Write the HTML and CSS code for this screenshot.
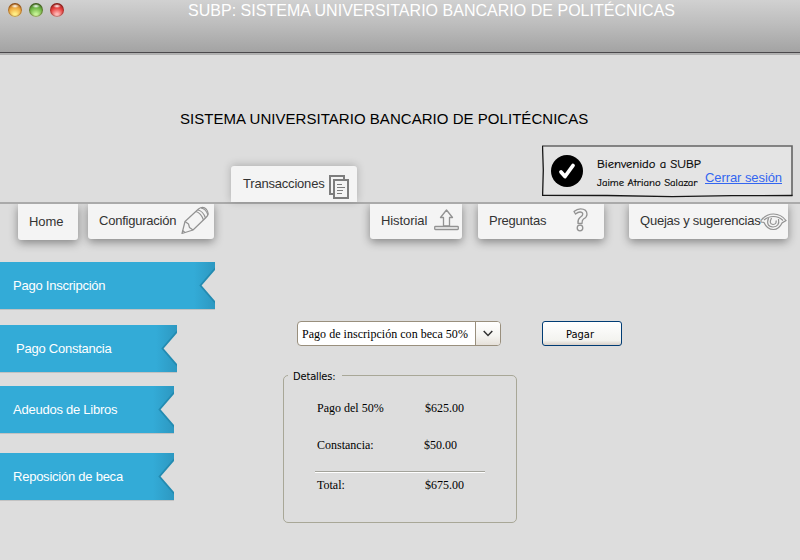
FILE: index.html
```html
<!DOCTYPE html>
<html lang="es">
<head>
<meta charset="utf-8">
<title>SUBP</title>
<link rel="stylesheet" href="styles.css">
</head>
<body>
<header class="titlebar">
  <div class="lights"><i class="light amber"></i><i class="light green"></i><i class="light red"></i></div>
  <div class="window-title">SUBP: SISTEMA UNIVERSITARIO BANCARIO DE POLITÉCNICAS</div>
</header>
<h1 class="heading">SISTEMA UNIVERSITARIO BANCARIO DE POLITÉCNICAS</h1>
<div class="upper">
  <a class="tab active"><span>Transacciones</span>
    <svg class="icon-copy" width="20" height="24" viewBox="0 0 20 24" fill="none" stroke="#7d7d7d" stroke-width="2"><path d="M15 4V1H1v18h3"/><path d="M5 5h14v18H5z"/><path d="M8 9.500h5M8 12.500h8M8 15.500h6M8 18.500h5" stroke-width="1"/></svg>
  </a>
  <section class="welcome">
    <svg class="sketch" width="252" height="53" viewBox="0 0 252 53"><path d="M.8 .800H250V51L190 50.700 130 51.600 65 51 .8 50.300 1.200 25Z" fill="#e4e4e4"/><path d="M.5 1H250V51" fill="none" stroke="#646464" stroke-width="1.600"/><path d="M.5 .8L1.300 25 .6 50.300 65 50.500 130 51.600 190 50.700 250.500 50.500" fill="none" stroke="#171717" stroke-width="1.300"/></svg>
    <svg class="check" width="32" height="32" viewBox="0 0 32 32"><circle cx="16" cy="16" r="16"/><path d="M10 17l4 4.500 8-11" fill="none" stroke="#fff" stroke-width="3.800" stroke-linecap="round" stroke-linejoin="round"/></svg>
    <div class="user"><p class="greeting">Bienvenido a SUBP</p><p class="name">Jaime Atriano Salazar</p></div>
    <a class="logout">Cerrar sesión</a>
  </section>
</div>
<nav class="lower">
  <a class="tab home"><span>Home</span></a>
  <a class="tab config"><span>Configuración</span>
    <svg class="icon-pencil" width="28" height="29" viewBox="0 0 28 29" fill="none" stroke="#929292" stroke-width="1.200" stroke-linejoin="round"><path d="M1 27.500L4 15.500 17.500 3Q22-.5 25.500 3.500 29 8 25 11.500L12 24Z"/><path d="M4 15.500l3.500 2.500 1 3.500 3.500 2.500M1.500 24.500l2.500 2M15 5.500q5 1.500 7.500 8.500M17 4q5 1 7.500 8M20 2q5 1 7 7"/></svg>
  </a>
  <a class="tab history"><span>Historial</span>
    <svg class="icon-upload" width="25" height="22" viewBox="0 0 25 22" fill="none" stroke="#929292" stroke-width="1.300" stroke-linejoin="round"><path d="M12.500 1L18.500 8.500H15.500V17H9.500V8.500H6.500Z"/><rect x=".7" y="17.500" width="23.600" height="3" rx=".8"/></svg>
  </a>
  <a class="tab questions"><span>Preguntas</span>
    <svg class="icon-help" width="15" height="24" viewBox="0 0 15 24" fill="none" stroke="#929292" stroke-width="1.300" stroke-linejoin="round"><path d="M1 3.500Q4 .8 7.500.8 14 .8 14 6.200 14 9 10.500 11 9 12 9 15.500H5Q4.500 11.500 7 9.500 10 7.500 9.800 6 9.500 4 7 4 5 4 2.500 6Z"/><circle cx="7" cy="20" r="2.800"/></svg>
  </a>
  <a class="tab complaints"><span>Quejas y sugerencias</span>
    <svg class="icon-eye" width="27" height="18" viewBox="0 0 27 18" fill="none" stroke="#929292" stroke-width="1.200"><path d="M1 7.500Q6 1 13.500 1 21 1 26 7.500L22 10Q19 16.500 13.500 16.500 7 16.500 4 9.500L1 9Z"/><path d="M4 7Q8 3.500 13.500 3.500 19 3.500 23 7.500"/><path d="M8.500 5Q5.500 13.500 13 14 20 13.500 18.500 6"/><path d="M11.500 5Q8.500 11 13 11.500 17 11 16 7.500"/></svg>
  </a>
</nav>
<main class="main">
  <aside class="side">
    <a class="ribbon inscripcion">Pago Inscripción<svg class="notch" width="30" height="47" viewBox="0 0 30 47"><path d="M30.500 6L15.500 23.500 30.500 41" fill="#ddd" stroke="#238bb1" stroke-width="1.800"/></svg></a>
    <a class="ribbon constancia">Pago Constancia<svg class="notch" width="30" height="47" viewBox="0 0 30 47"><path d="M30.500 6L15.500 23.500 30.500 41" fill="#ddd" stroke="#238bb1" stroke-width="1.800"/></svg></a>
    <a class="ribbon libros">Adeudos de Libros<svg class="notch" width="30" height="47" viewBox="0 0 30 47"><path d="M30.500 6L15.500 23.500 30.500 41" fill="#ddd" stroke="#238bb1" stroke-width="1.800"/></svg></a>
    <a class="ribbon beca">Reposición de beca<svg class="notch" width="30" height="47" viewBox="0 0 30 47"><path d="M30.500 6L15.500 23.500 30.500 41" fill="#ddd" stroke="#238bb1" stroke-width="1.800"/></svg></a>
  </aside>
  <section class="content">
    <div class="controls">
      <div class="select"><span class="value">Pago de inscripción con beca 50%</span><span class="arrow"><svg width="10" height="7" viewBox="0 0 10 7"><path d="M.7 1L5 5.500 9.300 1" fill="none" stroke="#333" stroke-width="1.500"/></svg></span></div>
      <button class="pay">Pagar</button>
    </div>
    <fieldset class="details">
      <legend>Detalles:</legend>
      <div class="row first"><span>Pago del 50%</span><span>$625.00</span></div>
      <div class="row second"><span>Constancia:</span><span>$50.00</span></div>
      <div class="rule"></div>
      <div class="row total"><span>Total:</span><span>$675.00</span></div>
    </fieldset>
  </section>
</main>
</body>
</html>
```
FILE: styles.css
```css
* { box-sizing: border-box; }
body { margin: 0; width: 800px; height: 560px; overflow: hidden; background: #ddd; font-family: "Liberation Sans", Arial, sans-serif; }
p, h1 { margin: 0; font-weight: normal; }
svg { display: block; flex: none; }

.titlebar { height: 55px; display: flex; align-items: flex-start; background: linear-gradient(#d1d1d1, #bdbdbd 24px, #a3a3a3 52px, #4a484b 52px, #4a484b 53px, #b0b0b0 53px); }
.lights { display: flex; gap: 7px; padding: 3px 0 0 8px; width: 188px; }
.light { width: 14px; height: 14px; border-radius: 50%; box-shadow: inset 0 0 1px 1px rgba(80,30,20,.4); }
.amber { background: radial-gradient(ellipse 4px 2px at 50% 22%, #fff, transparent), radial-gradient(circle 13px at 50% 85%, #ffef86 10%, #efaa40 55%, #8c4710 100%); }
.green { background: radial-gradient(ellipse 4px 2px at 50% 22%, #fff, transparent), radial-gradient(circle 13px at 50% 85%, #c6f396 10%, #70b746 55%, #285c19 100%); }
.red { background: radial-gradient(ellipse 4px 2px at 50% 22%, #fff, transparent), radial-gradient(circle 13px at 50% 85%, #ffb7b5 10%, #e73e3d 55%, #80120f 100%); }
.window-title { padding-top: 1px; font-size: 16px; line-height: 20px; letter-spacing: .02px; color: #fff; white-space: nowrap; }

.heading { height: 90px; padding: 54px 0 0 180px; font-size: 15px; line-height: 20px; letter-spacing: .04px; color: #000; white-space: nowrap; }

.upper { height: 59px; display: flex; align-items: flex-start; padding-left: 231px; border-bottom: 2px solid #aaa; }
.tab { display: flex; position: relative; height: 36px; padding: 0 0 0 11px; background: #f4f4f4; border-radius: 0 0 3px 3px; box-shadow: 0 3px 10px rgba(0,0,0,.4); color: #333; font-size: 13px; line-height: 36px; letter-spacing: -.23px; white-space: nowrap; }
.active { width: 126px; margin-top: 21px; padding-left: 12px; border-radius: 3px 3px 0 0; box-shadow: 0 -1px 9px rgba(0,0,0,.22); letter-spacing: -.2px; }
.home, .history { letter-spacing: -.08px; }
.icon-copy { margin: 9px 8px 0 auto; }

.welcome { position: relative; display: flex; width: 252px; height: 53px; margin-left: 185px; padding: 1px 0 0 9px; color: #000; }
.sketch { position: absolute; left: 0; top: 0; }
.check { position: relative; margin: 9px 0 0 0; }
.user { position: relative; width: 108px; margin-left: 14px; padding-top: 8px; font-family: "Comic Sans MS", "Comic Neue", "Open Sans", sans-serif; white-space: nowrap; -webkit-text-stroke: .2px #000; }
.greeting { font-size: 12.6px; line-height: 20px; }
.name { font-size: 10.700px; line-height: 17px; }
.logout { position: relative; padding-top: 22px; font-size: 13px; line-height: 20px; letter-spacing: -.08px; color: #3366f0; text-decoration: underline; white-space: nowrap; }

.lower { display: flex; align-items: flex-start; height: 58px; padding-left: 18px; margin-top: -1px; clip-path: inset(1px 0 -20px 0); }
.home { width: 60px; margin-top: 1px; }
.config { width: 126px; margin-left: 10px; }
.history { width: 92px; margin-left: 156px; }
.questions { width: 126px; margin-left: 16px; }
.complaints { width: 159px; margin-left: 25px; }
.icon-pencil { margin: 3px 5px 0 auto; }
.icon-upload { margin: 6px 3px 0 auto; }
.icon-help { margin: 5px 16px 0 auto; }
.icon-eye { margin: 10px 2px 0 auto; }

.main { display: flex; }
.side { width: 283px; padding-top: 1px; }
.ribbon { display: flex; justify-content: space-between; height: 47px; padding-left: 13px; background: #33abd7; box-shadow: 0 1px 0 #c2c2c2; color: #fff; font-size: 13px; line-height: 47px; letter-spacing: -.24px; white-space: nowrap; }
.notch { background: linear-gradient(90deg, #33abd7 30%, #2d98c1); }
.inscripcion { width: 215px; }
.constancia { width: 177px; margin-top: 16px; padding-left: 16px; }
.libros { width: 174px; margin-top: 14px; }
.beca { width: 174px; margin-top: 20px; }

.content { padding-top: 60px; }
.controls { display: flex; padding-left: 14px; gap: 41px; }
.select { display: flex; width: 204px; height: 25px; border: 1px solid #998f7d; border-radius: 4px; background: #fff; overflow: hidden; }
.value { width: 178px; padding-left: 4px; border-right: 1px solid #998f7d; font: 12px/24px "Liberation Serif", serif; letter-spacing: .03px; color: #000; white-space: nowrap; }
.arrow { flex: 1; display: flex; align-items: center; justify-content: center; background: linear-gradient(#fff, #f5f4f0 60%, #e5e0d9); }
.pay { width: 80px; height: 25px; padding: 2px 4px 0 0; border: 1px solid #003c74; border-radius: 3px; background: linear-gradient(#fff, #f3f3ef 80%, #d8d0c8); font: 11px/21px "DejaVu Sans Condensed", "DejaVu Sans", sans-serif; color: #000; }
.details { width: 234px; height: 154px; margin: 23px 0 0; padding: 0 31px; border: 1px solid #a8a797; border-radius: 5px; min-width: 0; }
.details legend { height: 13px; margin-left: -27px; padding: 0 7px 0 5px; font: 11px/15px "DejaVu Sans Condensed", "DejaVu Sans", sans-serif; letter-spacing: -.15px; color: #000; }
.row { display: flex; padding-left: 2px; font: 12px/16px "Liberation Serif", serif; color: #000; }
.row span:first-child { width: 108px; }
.first { margin-top: 18px; }
.second { margin-top: 21px; }
.second span:first-child { width: 107px; }
.rule { width: 170px; height: 2px; margin-top: 18px; border-top: 1px solid #a3a39b; border-bottom: 1px solid #fff; }
.total { margin-top: 4px; }
```
